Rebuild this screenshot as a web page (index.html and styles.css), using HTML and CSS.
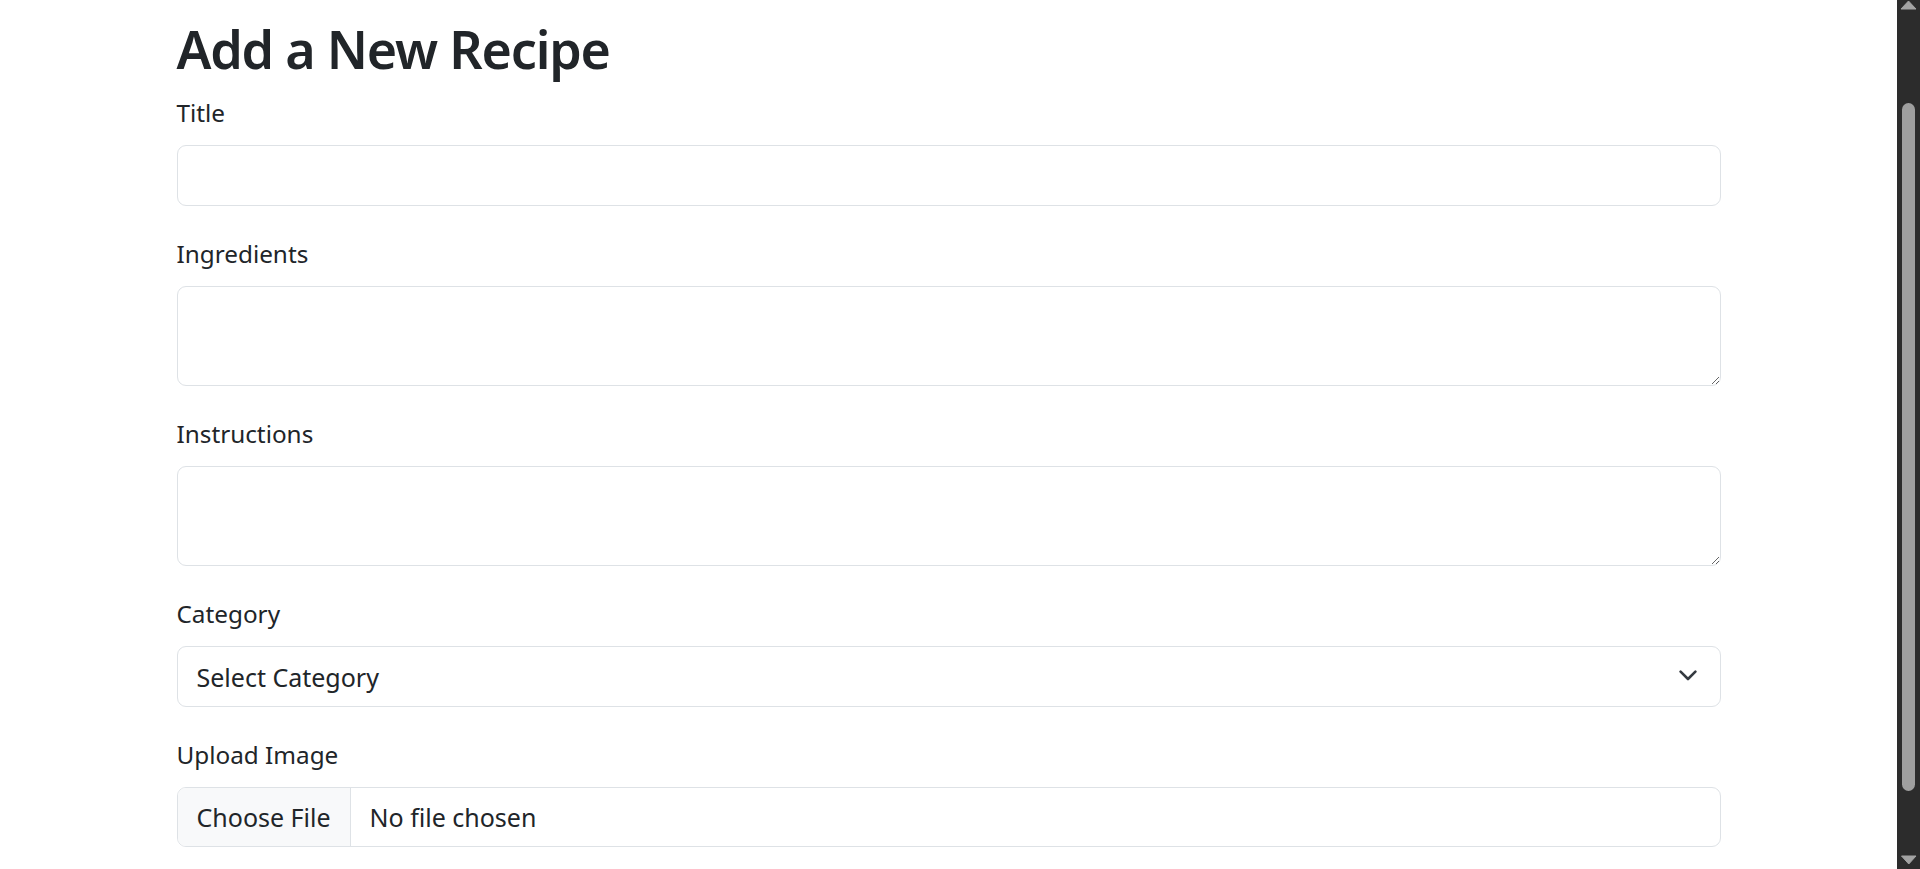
FILE: index.html
```html
<!DOCTYPE html>
<html lang="en">
<head>
<meta charset="utf-8">
<title>Add a New Recipe</title>
<link rel="stylesheet" href="styles.css">
</head>
<body>
<div class="viewport">
  <main class="container">
    <h1 class="page-title">Add a New Recipe</h1>
    <form class="recipe-form">
      <div class="field">
        <label class="field-label" for="title">Title</label>
        <input class="control control-input" id="title" type="text">
      </div>
      <div class="field">
        <label class="field-label" for="ingredients">Ingredients</label>
        <textarea class="control control-textarea" id="ingredients"></textarea>
      </div>
      <div class="field">
        <label class="field-label" for="instructions">Instructions</label>
        <textarea class="control control-textarea" id="instructions"></textarea>
      </div>
      <div class="field">
        <label class="field-label" for="category">Category</label>
        <div class="select-wrap">
          <select class="control control-select" id="category">
            <option>Select Category</option>
          </select>
          <svg class="select-chevron" viewBox="0 0 18 11" aria-hidden="true">
            <polyline points="1.6,1.6 9,9 16.4,1.6" fill="none" stroke="#343a40" stroke-width="2.6" stroke-linecap="round" stroke-linejoin="round"/>
          </svg>
        </div>
      </div>
      <div class="field">
        <label class="field-label">Upload Image</label>
        <div class="control file-control">
          <span class="file-btn">Choose File</span>
          <span class="file-name">No file chosen</span>
        </div>
      </div>
    </form>
  </main>
</div>
<div class="scrollbar" aria-hidden="true">
  <svg class="scroll-arrow" viewBox="0 0 23 10"><polygon points="4,9 19,9 11.5,1" fill="#a3a3a3" stroke="#a3a3a3" stroke-width="1" stroke-linejoin="round"/></svg>
  <div class="scroll-thumb"></div>
  <div class="scroll-space"></div>
  <svg class="scroll-arrow scroll-arrow-down" viewBox="0 0 23 10"><polygon points="4.5,1 19,1 11.75,9" fill="#a3a3a3" stroke="#a3a3a3" stroke-width="1" stroke-linejoin="round"/></svg>
</div>
</body>
</html>
```

FILE: styles.css
```css
html, body {
  margin: 0;
  padding: 0;
  height: 100%;
}
body {
  font-family: "Noto Sans", "Open Sans", sans-serif;
  color: #212529;
  background: #fff;
  overflow: hidden;
}
.viewport {
  width: calc(100% - 23px);
}
.container {
  width: 1544px;
  margin: 0 auto;
  padding-top: 16px;
}
.page-title {
  font-size: 52px;
  line-height: 66px;
  font-weight: 600;
  letter-spacing: -1.2px;
  margin: 0 0 13px;
}
.field {
  margin-bottom: 30px;
}
.field-label {
  display: block;
  font-size: 24.3px;
  line-height: 36px;
  margin-bottom: 14px;
}
.control {
  display: block;
  width: 100%;
  box-sizing: border-box;
  margin: 0;
  border: 1px solid #dee2e6;
  border-radius: 9px;
  background: #fff;
  font-family: inherit;
  font-size: 25px;
  line-height: 36px;
  color: #212529;
  padding: 11.5px 19px;
  outline: none;
}
.control-input {
  height: 61px;
}
.control-textarea {
  height: 100px;
  resize: vertical;
}
.select-wrap {
  position: relative;
}
.control-select {
  appearance: none;
  -webkit-appearance: none;
  height: 61px;
  padding-right: 54px;
}
.select-chevron {
  position: absolute;
  right: 24px;
  top: 24px;
  width: 18px;
  height: 11px;
  pointer-events: none;
}
.file-control {
  display: flex;
  align-items: stretch;
  height: 60px;
  padding: 0;
  overflow: hidden;
}
.file-btn {
  display: flex;
  align-items: center;
  padding: 0 19px;
  background: #f8f9fa;
  border-right: 1px solid #dee2e6;
}
.file-name {
  display: flex;
  align-items: center;
  padding-left: 19px;
}
.scrollbar {
  position: fixed;
  top: 0;
  right: 0;
  width: 23px;
  height: 100%;
  background: #2c2c2c;
  display: flex;
  flex-direction: column;
}
.scroll-arrow {
  display: block;
  width: 23px;
  height: 10px;
  flex: none;
}
.scroll-arrow-down {
  margin-bottom: 4px;
}
.scroll-thumb {
  flex: none;
  margin: 93px 0 0 5px;
  width: 13px;
  height: 688px;
  border-radius: 7px;
  background: #9f9f9f;
}
.scroll-space {
  flex: 1;
}
```
